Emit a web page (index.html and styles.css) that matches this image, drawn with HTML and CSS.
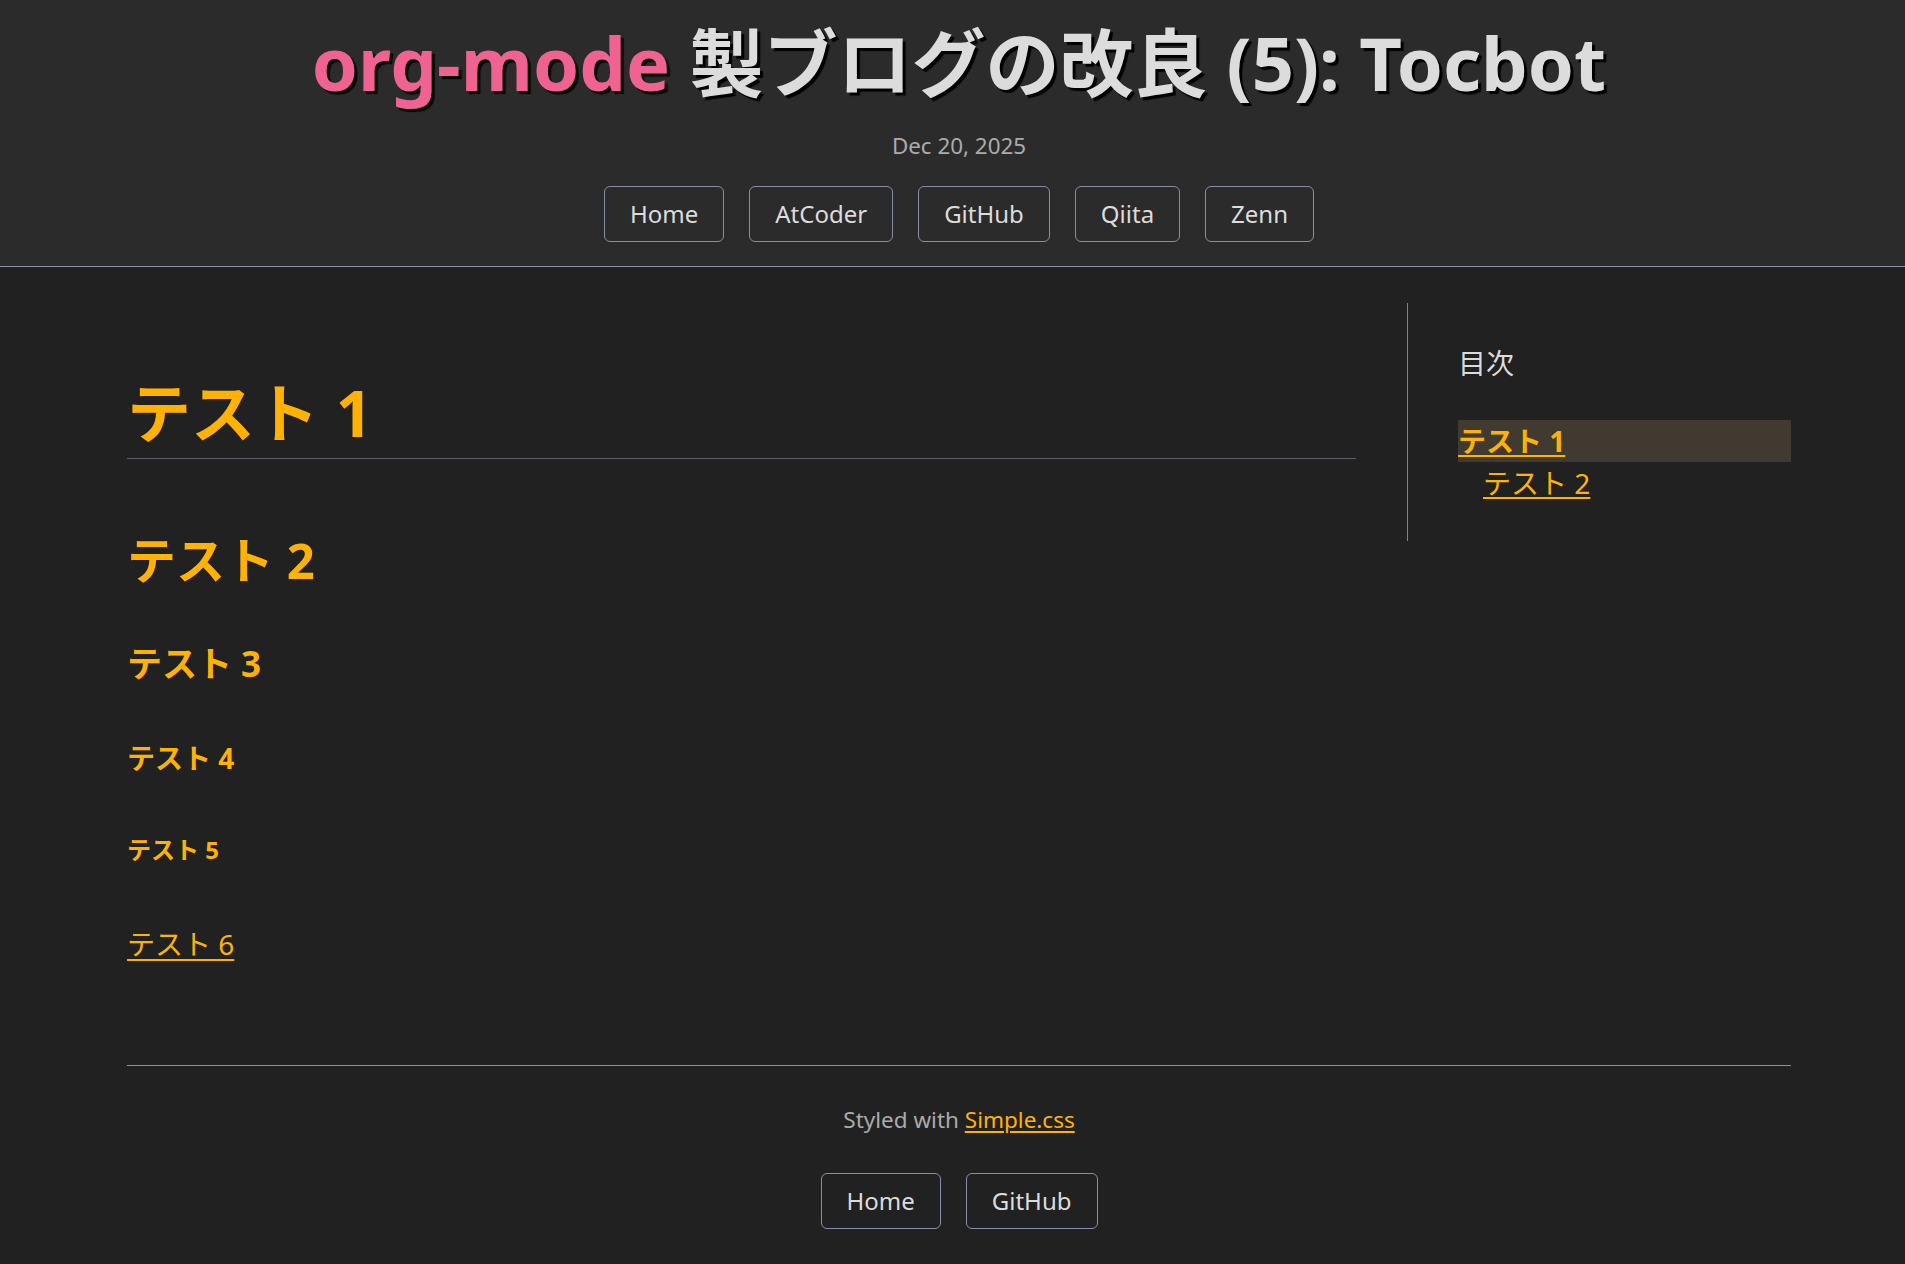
FILE: index.html
```html
<!DOCTYPE html>
<html lang="ja">
<head>
<meta charset="utf-8">
<title>org-mode 製ブログの改良 (5): Tocbot</title>
<link rel="stylesheet" href="styles.css">
</head>
<body>
<header class="site-header">
  <h1 class="title"><span class="title-accent">org-mode</span> 製ブログの改良 (5): Tocbot</h1>
  <p class="date">Dec 20, 2025</p>
  <nav class="nav">
    <a class="nav-link" href="#">Home</a>
    <a class="nav-link" href="#">AtCoder</a>
    <a class="nav-link" href="#">GitHub</a>
    <a class="nav-link" href="#">Qiita</a>
    <a class="nav-link" href="#">Zenn</a>
  </nav>
</header>
<div class="layout">
  <main class="content">
    <h1 class="h-1">テスト 1</h1>
    <h2 class="h-2">テスト 2</h2>
    <h3 class="h-3">テスト 3</h3>
    <h4 class="h-4">テスト 4</h4>
    <h5 class="h-5">テスト 5</h5>
    <p class="para"><a class="link" href="#">テスト 6</a></p>
  </main>
  <aside class="toc">
    <p class="toc-title">目次</p>
    <ol class="toc-list">
      <li class="toc-item is-active"><a class="toc-link" href="#">テスト 1</a>
        <ol class="toc-list toc-sub">
          <li class="toc-item"><a class="toc-link" href="#">テスト 2</a></li>
        </ol>
      </li>
    </ol>
  </aside>
</div>
<footer class="site-footer">
  <p class="footer-text">Styled with <a class="link" href="#">Simple.css</a></p>
  <nav class="nav">
    <a class="nav-link" href="#">Home</a>
    <a class="nav-link" href="#">GitHub</a>
  </nav>
</footer>
</body>
</html>
```
FILE: styles.css
```css
html, body {
  margin: 0;
  padding: 0;
}
body {
  background: #212121;
  color: #dcdcdc;
  font-family: "Noto Sans", "Noto Sans CJK JP", sans-serif;
  font-size: 23px;
  line-height: 1.5;
  min-height: 1264px;
}
.site-header {
  background: #2b2b2b;
  border-bottom: 1px solid #898ea4;
  text-align: center;
  padding: 19px 0 0 13px;
  height: 267px;
  box-sizing: border-box;
}
.title {
  margin: 0;
  font-size: 74px;
  line-height: 88.8px;
  font-weight: 700;
  color: #dcdcdc;
  text-shadow: 3px 3px 1px #000;
}
.title-accent {
  color: #f06292;
}
.date {
  margin: 21px 0 0;
  font-size: 22.4px;
  line-height: 33px;
  color: #ababab;
}
.nav {
  display: flex;
  justify-content: center;
  gap: 25px;
  margin-top: 24px;
}
.nav-link {
  display: block;
  border: 1px solid #898ea4;
  border-radius: 6px;
  padding: 9px 25px;
  font-size: 24px;
  line-height: 36px;
  color: #dcdcdc;
  text-decoration: none;
}
.layout {
  display: grid;
  grid-template-columns: 1fr 384px;
  column-gap: 51px;
  align-items: start;
  margin: 36px 114px 0 127px;
}
.content {
  padding-top: 1px;
}
.content h1, .content h2, .content h3, .content h4, .content h5 {
  color: #ffb300;
  font-weight: 700;
  line-height: 1.2;
  margin: 0;
}
.content .h-1 {
  font-size: 64px;
  margin-top: 71px;
  padding-bottom: 6px;
  border-bottom: 1px solid #5c5e6b;
}
.content .h-2 {
  font-size: 49px;
  margin-top: 72px;
}
.content .h-3 {
  font-size: 35px;
  margin-top: 53px;
}
.content .h-4 {
  font-size: 28px;
  margin-top: 57px;
}
.content .h-5 {
  font-size: 24px;
  margin-top: 61px;
}
.para {
  margin: 58px 0 0;
  font-size: 28px;
  line-height: 42px;
}
.link {
  color: #ffb300;
  text-decoration: underline;
  text-underline-offset: 0.14em;
}
.toc {
  border-left: 1px solid #7d8193;
  padding: 39px 0 37px 50px;
  font-size: 28px;
  line-height: 42px;
}
.toc-title {
  margin: 0 0 36px;
  line-height: 42px;
  color: #dcdcdc;
}
.toc-list {
  list-style: none;
  margin: 0;
  padding: 0;
}
.toc-sub {
  padding-left: 25px;
}
.toc-link {
  color: #ffb300;
  text-decoration: underline;
  text-underline-offset: 3px;
}
.toc-item.is-active > .toc-link {
  font-weight: 700;
  display: block;
  background: #413a31;
}
.site-footer {
  margin: 100px 114px 0 127px;
  border-top: 1px solid #898ea4;
  text-align: center;
  padding: 37px 0 34px;
}
.footer-text {
  margin: 0;
  font-size: 22.5px;
  line-height: 33px;
  color: #ababab;
}
.site-footer .nav {
  margin-top: 37px;
}
```
